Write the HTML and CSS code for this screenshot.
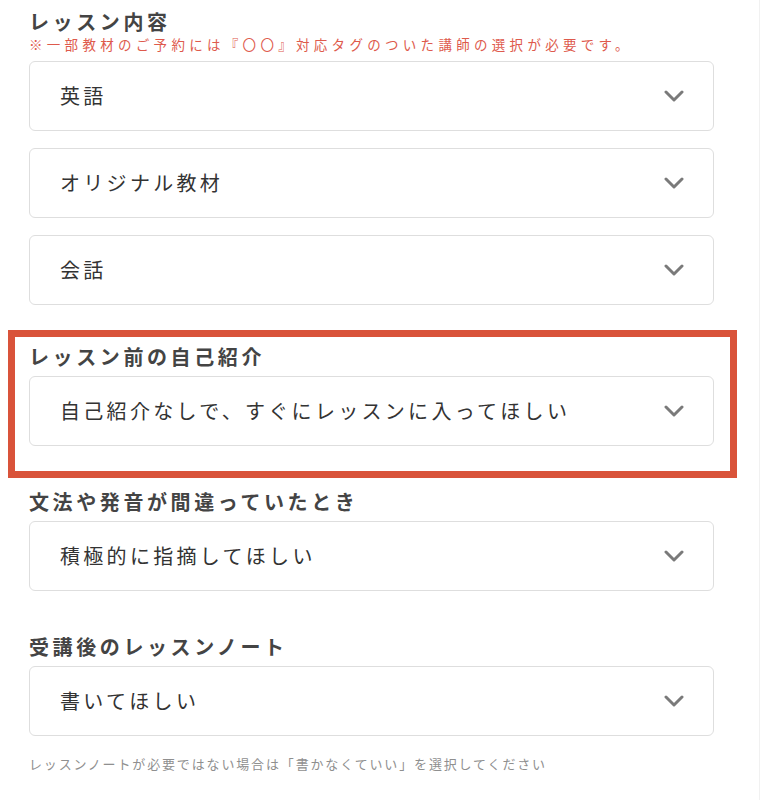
FILE: index.html
```html
<!DOCTYPE html>
<html lang="ja">
<head>
<meta charset="utf-8">
<title>レッスン設定</title>
<link rel="stylesheet" href="styles.css">
</head>
<body>
<div class="page">
  <section class="group group-first">
    <h2 class="label">レッスン内容</h2>
    <p class="note">※一部教材のご予約には『〇〇』対応タグのついた講師の選択が必要です。</p>
    <div class="select"><span class="value">英語</span><svg class="chev" viewBox="0 0 20 12" width="20" height="12"><path d="M2 2 L10 10 L18 2" /></svg></div>
    <div class="select"><span class="value">オリジナル教材</span><svg class="chev" viewBox="0 0 20 12" width="20" height="12"><path d="M2 2 L10 10 L18 2" /></svg></div>
    <div class="select"><span class="value">会話</span><svg class="chev" viewBox="0 0 20 12" width="20" height="12"><path d="M2 2 L10 10 L18 2" /></svg></div>
  </section>

  <section class="group highlight">
    <h2 class="label">レッスン前の自己紹介</h2>
    <div class="select"><span class="value">自己紹介なしで、すぐにレッスンに入ってほしい</span><svg class="chev" viewBox="0 0 20 12" width="20" height="12"><path d="M2 2 L10 10 L18 2" /></svg></div>
  </section>

  <section class="group group-after-hl">
    <h2 class="label">文法や発音が間違っていたとき</h2>
    <div class="select"><span class="value">積極的に指摘してほしい</span><svg class="chev" viewBox="0 0 20 12" width="20" height="12"><path d="M2 2 L10 10 L18 2" /></svg></div>
  </section>

  <section class="group group-last">
    <h2 class="label">受講後のレッスンノート</h2>
    <div class="select"><span class="value">書いてほしい</span><svg class="chev" viewBox="0 0 20 12" width="20" height="12"><path d="M2 2 L10 10 L18 2" /></svg></div>
    <p class="help">レッスンノートが必要ではない場合は「書かなくていい」を選択してください</p>
  </section>
</div>
</body>
</html>
```

FILE: styles.css
```css
html, body {
  margin: 0;
  padding: 0;
  background: #ffffff;
}

body {
  font-family: "Noto Sans CJK JP", "Noto Sans", sans-serif;
  color: #333333;
}

.page {
  width: 760px;
  min-height: 800px;
  box-sizing: border-box;
  border-right: 1px solid #f1f1f1;
  padding: 10px 0 0 29px;
}

.group {
  width: 685px;
  display: flex;
  flex-direction: column;
}

.label {
  margin: 0 0 7px 0;
  font-size: 20px;
  line-height: 24px;
  font-weight: 700;
  letter-spacing: 3.6px;
  color: #444444;
}

.group-first .label {
  margin-bottom: 1px;
}

.note {
  margin: 0 0 8px 0;
  font-size: 13.5px;
  line-height: 18px;
  letter-spacing: 4.3px;
  color: #de5a4c;
  white-space: nowrap;
}

.select {
  height: 70px;
  box-sizing: border-box;
  border: 1px solid #dedede;
  border-radius: 6px;
  background: #ffffff;
  display: flex;
  align-items: center;
  justify-content: space-between;
  padding: 0 29px 0 30px;
}

.select + .select {
  margin-top: 17px;
}

.value {
  font-size: 20px;
  line-height: 24px;
  letter-spacing: 3.3px;
  color: #333333;
  white-space: nowrap;
}

.chev {
  flex: none;
  display: block;
}

.chev path {
  fill: none;
  stroke: #7a7a7a;
  stroke-width: 3;
  stroke-linecap: round;
  stroke-linejoin: round;
}

.highlight {
  margin: 25px 0 0 -21px;
  width: 729px;
  box-sizing: border-box;
  border: 7px solid #d9533a;
  padding: 8px 16px 25px 14px;
}

.group-after-hl {
  margin-top: 12px;
}

.group-last {
  margin-top: 44px;
}

.help {
  margin: 19px 0 0 0;
  font-size: 13px;
  line-height: 18px;
  letter-spacing: 1.85px;
  color: #8f8f8f;
  white-space: nowrap;
}
```
